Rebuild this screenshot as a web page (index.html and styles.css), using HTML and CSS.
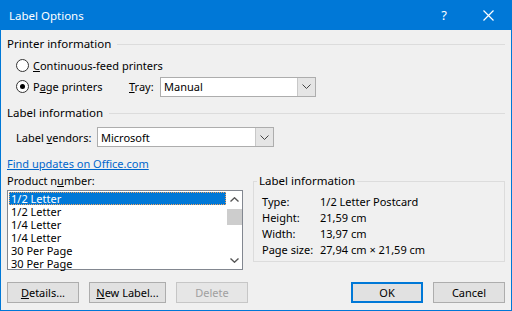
FILE: index.html
```html
<!DOCTYPE html>
<html lang="en">

<head>
    <meta charset="UTF-8">
    <title>Label Options</title>
    <link rel="stylesheet" href="styles.css">
</head>

<body>
    <div class="dialog">
        <div class="titlebar">
            <span class="title">Label Options</span>
            <span class="help">?</span>
            <svg class="close" width="11" height="11" viewBox="0 0 11 11">
                <path d="M0.5 0.5 L10.5 10.5 M10.5 0.5 L0.5 10.5" stroke="#fff" stroke-width="1.2" fill="none" />
            </svg>
        </div>

        <div class="content">
            <div class="heading"><span>Printer information</span><div class="rule"></div></div>

            <div class="radio-row first">
                <span class="radio"></span>
                <span><u>C</u>ontinuous-feed printers</span>
            </div>
            <div class="radio-row">
                <div class="radio-cell">
                    <span class="radio checked"></span>
                    <span>P<u>a</u>ge printers</span>
                </div>
                <span class="tray-label"><u>T</u>ray:</span>
                <div class="select tray">
                    <span class="select-value">Manual</span>
                    <span class="select-button">
                        <svg width="9" height="5" viewBox="0 0 9 5"><path d="M0.5 0.5 L4.5 4.5 L8.5 0.5" stroke="#444" fill="none" /></svg>
                    </span>
                </div>
            </div>

            <div class="heading second"><span>Label information</span><div class="rule"></div></div>

            <div class="vendor-row">
                <span class="vendor-label">Label <u>v</u>endors:</span>
                <div class="select vendor">
                    <span class="select-value">Microsoft</span>
                    <span class="select-button">
                        <svg width="9" height="5" viewBox="0 0 9 5"><path d="M0.5 0.5 L4.5 4.5 L8.5 0.5" stroke="#444" fill="none" /></svg>
                    </span>
                </div>
            </div>

            <a class="link" href="#">Find updates on Office.com</a>

            <div class="lower">
                <div class="product">
                    <div class="product-label">Product n<u>u</u>mber:</div>
                    <div class="listbox">
                        <div class="items">
                            <div class="item selected">1/2 Letter</div>
                            <div class="item">1/2 Letter</div>
                            <div class="item">1/4 Letter</div>
                            <div class="item">1/4 Letter</div>
                            <div class="item">30 Per Page</div>
                            <div class="item">30 Per Page</div>
                        </div>
                        <div class="scrollbar">
                            <svg class="arrow" width="9" height="5" viewBox="0 0 9 5"><path d="M0.5 4.5 L4.5 0.8 L8.5 4.5" stroke="#555" stroke-width="1.4" fill="none" /></svg>
                            <div class="track"><div class="thumb"></div></div>
                            <svg class="arrow" width="9" height="5" viewBox="0 0 9 5"><path d="M0.5 0.5 L4.5 4.2 L8.5 0.5" stroke="#555" stroke-width="1.4" fill="none" /></svg>
                        </div>
                    </div>
                </div>

                <fieldset class="info">
                    <legend>Label information</legend>
                    <div class="info-grid">
                        <span>Type:</span><span>1/2 Letter Postcard</span>
                        <span>Height:</span><span>21,59 cm</span>
                        <span>Width:</span><span>13,97 cm</span>
                        <span>Page size:</span><span>27,94 cm × 21,59 cm</span>
                    </div>
                </fieldset>
            </div>

            <div class="buttons">
                <button class="btn"><u>D</u>etails...</button>
                <button class="btn wide"><u>N</u>ew Label...</button>
                <button class="btn" disabled>Delete</button>
                <div class="spacer"></div>
                <button class="btn default">OK</button>
                <button class="btn">Cancel</button>
            </div>
        </div>
    </div>
</body>

</html>
```

FILE: styles.css
```css
body {
    margin: 0;
    font-family: "Noto Sans", Arial, sans-serif;
    font-size: 11px;
    color: #000;
    white-space: nowrap;
}

.dialog {
    width: 512px;
    height: 311px;
    box-sizing: border-box;
    border: 1px solid #0078d7;
    border-top: none;
    background-color: #f0f0f0;
    display: flex;
    flex-direction: column;
}

.titlebar {
    height: 30px;
    background-color: #0078d7;
    color: #fff;
    display: flex;
    align-items: center;
    padding-left: 9px;
    margin: 0 -1px;
}

.title {
    flex: 1;
    font-size: 11.5px;
}

.help {
    font-size: 13px;
    margin-right: 36px;
}

.close {
    margin-right: 18px;
}

.content {
    padding: 0 6px;
}

.heading {
    display: flex;
    align-items: center;
    height: 14px;
    line-height: 14px;
    margin-top: 7px;
    font-size: 11.5px;
}

.heading.second {
    margin-top: 9px;
}

.rule {
    flex: 1;
    height: 1px;
    background-color: #dcdcdc;
    margin-left: 6px;
}

.radio-row {
    display: flex;
    align-items: center;
    height: 21px;
    padding-left: 9px;
}

.radio-row.first {
    margin-top: 4px;
}

.radio-cell {
    display: flex;
    align-items: center;
    width: 113px;
}

.radio {
    width: 11px;
    height: 11px;
    border: 1px solid #333;
    border-radius: 50%;
    background-color: #fff;
    margin-right: 4px;
    position: relative;
}

.radio.checked::after {
    content: "";
    position: absolute;
    left: 3px;
    top: 3px;
    width: 5px;
    height: 5px;
    border-radius: 50%;
    background-color: #000;
}

.tray-label {
    width: 31px;
}

.select {
    height: 20px;
    box-sizing: border-box;
    border: 1px solid #adadad;
    background-color: #fff;
    display: flex;
    align-items: center;
}

.select.tray {
    width: 156px;
}

.select.vendor {
    width: 177px;
}

.select-value {
    flex: 1;
    padding-left: 3px;
}

.select-button {
    width: 17px;
    height: 18px;
    background-color: #e5e5e5;
    border-left: 1px solid #c8c8c8;
    display: flex;
    align-items: center;
    justify-content: center;
}

.vendor-row {
    display: flex;
    align-items: center;
    margin-top: 7px;
    padding-left: 9px;
}

.vendor-label {
    width: 81px;
}

.link {
    display: block;
    width: max-content;
    margin-top: 10px;
    line-height: 14px;
    color: #0066cc;
}

.lower {
    display: flex;
    margin-top: 3px;
}

.product {
    width: 236px;
}

.product-label {
    line-height: 14px;
}

.listbox {
    margin-top: 2px;
    height: 80px;
    box-sizing: border-box;
    border: 1px solid #828790;
    background-color: #fff;
    display: flex;
}

.items {
    flex: 1;
    padding: 1px 1px 0 1px;
}

.item {
    height: 13px;
    line-height: 13px;
    padding-left: 2px;
}

.item.selected {
    background-color: #0078d7;
    color: #fff;
    outline: 1px dotted #f4a460;
    outline-offset: -1px;
}

.scrollbar {
    width: 15px;
    background-color: #fff;
    display: flex;
    flex-direction: column;
    align-items: center;
}

.arrow {
    margin: 6px 0;
}

.track {
    flex: 1;
    width: 15px;
}

.thumb {
    margin-top: 1px;
    height: 16px;
    background-color: #cdcdcd;
}

.info {
    flex: 1;
    margin: 0 0 0 10px;
    padding: 0 0 0 3px;
    border: 1px solid #dcdcdc;
    height: 88px;
    box-sizing: border-box;
}

.info legend {
    padding: 0 2px;
    line-height: 14px;
    font-size: 11.5px;
}

.info-grid {
    display: grid;
    grid-template-columns: 58px auto;
    grid-auto-rows: 16px;
    align-items: center;
    margin-top: 5px;
    padding-left: 5px;
}

.buttons {
    display: flex;
    margin-top: 12px;
    gap: 10px;
}

.spacer {
    flex: 1;
}

.btn {
    width: 72px;
    height: 21px;
    box-sizing: border-box;
    font-family: inherit;
    font-size: 11px;
    color: #000;
    background-color: #e1e1e1;
    border: 1px solid #adadad;
    padding: 0;
}

.btn.wide {
    width: 77px;
}

.btn:disabled {
    color: #a0a0a0;
    background-color: #e6e6e6;
    border-color: #c6c6c6;
}

.btn.default {
    border: 2px solid #0078d7;
}
```
